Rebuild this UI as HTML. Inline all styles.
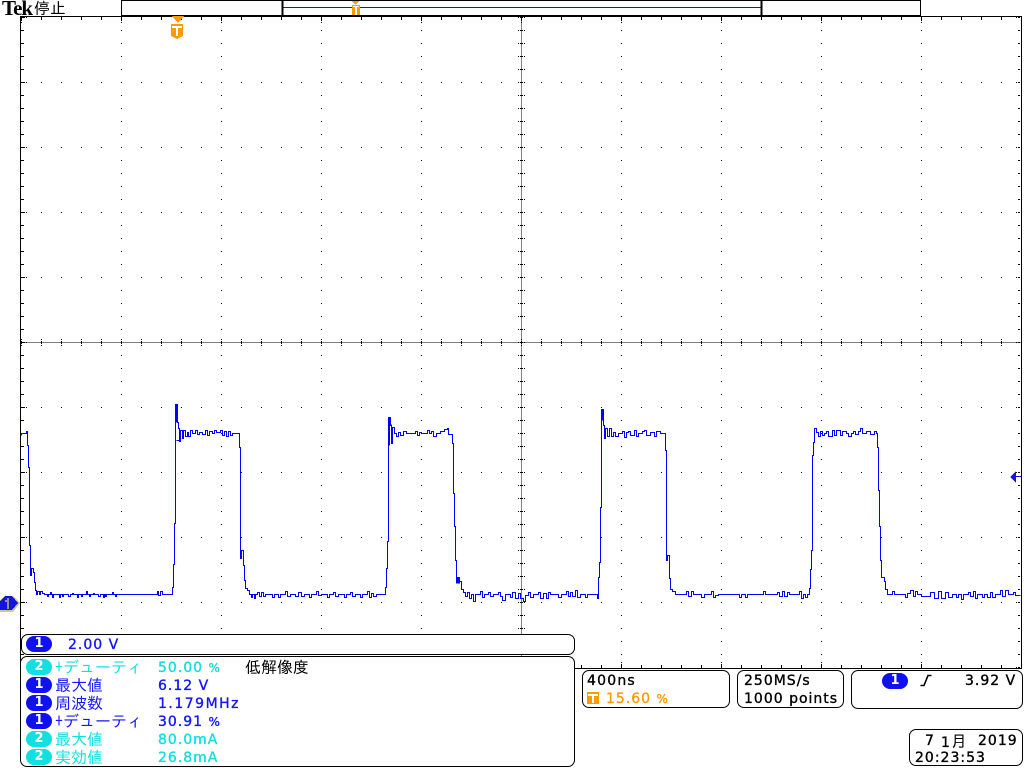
<!DOCTYPE html>
<html lang="ja"><head><meta charset="utf-8"><title>Tek</title>
<style>
html,body{margin:0;padding:0;background:#fff;width:1024px;height:768px;overflow:hidden}
#s{position:relative;width:1024px;height:768px;overflow:hidden;background:#fff}
svg{position:absolute;left:0;top:0}
.t{position:absolute;white-space:pre;font:14px/18px "DejaVu Sans","IPAGothic",sans-serif;letter-spacing:1px;color:#000;-webkit-text-stroke:.35px currentColor}
.j{position:absolute;white-space:pre;font:16px/18px "IPAGothic","Noto Sans CJK JP",sans-serif;letter-spacing:0}
.b{color:#1414ff}.c{color:#10e0e0}.o{color:#ff9900}
.n{font-size:12px;letter-spacing:0}
.p{position:absolute;box-sizing:border-box;border:1px solid #000;background:#fff;border-radius:7px}
.q{position:absolute;width:26px;height:16px;border-radius:8px;color:#fff;font:bold 13px/16px "DejaVu Sans",sans-serif;text-align:center}
.q.bb{background:#1010f0}.q.cc{background:#10e0e0}
</style></head><body><div id="s">
<svg width="1024" height="768" shape-rendering="crispEdges">
<defs>
<pattern id="a" width="20" height="65" patternUnits="userSpaceOnUse"><rect x="1" y="17" width="1" height="1"/></pattern>
<pattern id="b" width="100" height="13" patternUnits="userSpaceOnUse"><rect x="21" y="4" width="1" height="1"/></pattern>
<pattern id="d" width="20" height="2" patternUnits="userSpaceOnUse"><rect x="1" y="1" width="1" height="1"/></pattern>
<pattern id="e" width="2" height="13" patternUnits="userSpaceOnUse"><rect x="0" y="4" width="1" height="1"/></pattern>
<pattern id="f" width="20" height="1" patternUnits="userSpaceOnUse"><rect x="1" y="0" width="1" height="1"/></pattern>
<pattern id="g" width="100" height="2" patternUnits="userSpaceOnUse"><rect x="21" y="0" width="1" height="1"/></pattern>
<pattern id="h" width="1" height="13" patternUnits="userSpaceOnUse"><rect x="0" y="4" width="1" height="1"/></pattern>
<pattern id="i" width="2" height="65" patternUnits="userSpaceOnUse"><rect x="0" y="17" width="1" height="1"/></pattern>
</defs>
<rect x="21" y="17" width="1000" height="651" fill="url(#a)"/>
<rect x="21" y="17" width="1000" height="651" fill="url(#b)"/>
<rect x="21" y="339" width="1000" height="7" fill="url(#d)"/>
<rect x="518" y="17" width="7" height="651" fill="url(#e)"/>
<rect x="21" y="18" width="1000" height="2" fill="url(#f)"/>
<rect x="21" y="18" width="1000" height="5" fill="url(#g)"/>
<rect x="21" y="665" width="1000" height="2" fill="url(#f)"/>
<rect x="21" y="662" width="1000" height="5" fill="url(#g)"/>
<rect x="22" y="17" width="2" height="651" fill="url(#h)"/>
<rect x="1018" y="17" width="2" height="651" fill="url(#h)"/>
<rect x="22" y="17" width="5" height="651" fill="url(#i)"/>
<rect x="1015" y="17" width="5" height="651" fill="url(#i)"/>
<g transform="translate(.5 .5)">
<path d="M21 342.0H1021" stroke="#000" stroke-dasharray="1 1" fill="none"/>
<path d="M521 17V668" stroke="#000" stroke-dasharray="1 1" fill="none"/>
<path d="M20 16H1021V668H20Z" stroke="#000" fill="none"/>
<path d="M121 0H920V15H121Z" stroke="#000" fill="none"/>
<path d="M121 15H920" stroke="#000" fill="none"/>
<path d="M283 7H761" stroke="#1414d0" fill="none"/>
<path d="M282 0V15M761 0V15" stroke="#000" stroke-width="2" fill="none"/>
<path d="M282 0H761" stroke="#000" fill="none"/>
<path fill="none" stroke="#0000ff" d="M21 435V433H26V431H27V445H28V467H29V545H30V575H31V568H33V572H34V582H35V590H36V594H37V591H39V594H40V591H42V593H44V594H47V596H48V594H50V592H51V594h1v3h1v-3h6v3h1v-3h2v2h1v-2h5v2h2v-2h2v-1h1v1h4v3h1v-3h3v2h1v-2h4v-3h1v3h2v2h1v-2h3v-1h1v1h4v2h2v-2h3v3h1v-3h1v2h1v-2h6v-2h1v2h2v2h1v-2H157V591H158V595H160V591H162V594H172V587H173V564H174V523H175V404H177V422H178V428H179V441H180V430H182V438H183V430H185V436H187V432H188V436H190V430H192V433H195V430H197V434H199V432H202V434H205V430H207V435H209V431H212V433H214V430H216V432H220V430H222V435H224V431H226V436H228V431H230V435H232V433H239V447H240V558H241V550H243V565H244V580H245V588H247V590H249V594H251V597H252V594H254V598H255V594H257V592H259V596H261V592H263V596H265V594H272V597H274V594H278V597H280V594H285V591H287V596H290V594H295V596H298V592H301V596H304V594H309V597H311V594H316V591H318V595H321V594H327V597H329V594H333V592H335V596H338V594H344V597H346V594H350V592H352V596H355V594H360V597H362V594H367V591H369V597H371V593H373V596H376V594H385V587H386V568H387V541H388V417H390V425H391V443H392V427H394V433H396V436H398V432H400V435H403V431H406V433H415V431H417V435H419V432H421V433H427V430H429V433H431V431H433V436H436V433H440V431H444V429H447V428H448V434H452V443H453V493H454V526H455V560H456V577H459V581H461V589H463V592H465V596H467V592H469V598H471V594H473V601H475V594H480V591H482V597H484V594H488V592H490V596H493V594H498V592H500V596H502V600H505V594H510V597H512V592H515V598H518V593H520V598H523V601H525V595H528V592H530V597H533V594H538V592H540V598H543V593H546V598H548V592H550V594H558V597H561V594H566V591H568V596H570V592H572V596H575V590H577V597H580V594H585V597H587V594H597V598H598V577H599V562H600V507H601V409H603V425H604V438H605V428H607V436H609V428H611V436H613V432H615V436H618V433H622V431H624V437H626V432H628V431H630V435H634V430H636V436H638V433H642V431H644V430H646V435H650V432H654V436H656V431H660V433H665V450H666V560H667V555H669V578H670V589H672V591H675V594H686V591H688V596H691V591H693V594H701V597H704V594H711V591H713V597H715V595H718V594H739V597H741V594H745V597H747V594H763V591H765V594H777V592H779V596H782V591H784V596H787V592H789V594H799V591H801V598H803V594H805V597H807V594H809V588H810V569H811V550H812V455H813V442H814V428H816V432H818V436H820V431H822V435H824V433H826V431H828V436H832V430H834V435H836V430H840V435H842V431H846V433H848V436H851V433H853V431H855V434H858V431H860V428H862V433H866V431H870V434H874V431H876V433H877V447H878V490H879V526H880V560H881V577H884V581H885V589H887V594H892V591H894V594H905V597H907V593H910V590H913V596H915V591H917V594H921V596H930V592H934V598H938V591H941V598H945V592H948V597H952V594H956V597H958V594H961V599H963V594H968V592H970V596H973V591H975V598H977V594H982V597H984V594H987V597H990V592H992V597H995V594H1000V590H1002V596H1005V590H1008V594H1013V592H1015V595H1020"/>
<path d="M176 404V422M176 440H180M180 430H181M388 417V445M389 417V445M390 424H391M239 433H232M456 577V583M457 577V583M458 577V583M459 577V583M601 409V420M602 409V420" stroke="#0000ff" fill="none"/>
</g>
<polygon points="1010,477 1016,471 1016,483" fill="#1414e0"/>
<rect x="1015" y="476" width="6" height="1" fill="#1414e0"/>
<polygon points="0,600 5,596 13,596 20,603 13,612 0,612" fill="#c8c890"/>
<polygon points="0,601 5,596 12,596 18,603 12,610 0,610" fill="#1414e0"/>
<rect x="7" y="598" width="2" height="11" fill="#909090"/><rect x="5" y="600" width="2" height="2" fill="#909090"/>
<polygon points="172,16 184,16 178,23" fill="#ff9900"/>
<polygon points="171,24 183,24 183,36 177,39 171,36" fill="#ff9900"/>
<rect x="172" y="26" width="10" height="2" fill="#fff"/><rect x="176" y="26" width="2" height="10" fill="#fff"/>
<polygon points="352,1 359,1 355.5,5" fill="#ff9900"/>
<polygon points="352,5 360,5 360,15 352,15" fill="#ff9900"/>
<rect x="353" y="6" width="6" height="1" fill="#fff"/><rect x="355" y="6" width="2" height="9" fill="#fff"/>
</svg>
<div style="position:absolute;left:2px;top:-3px;font:bold 21px/22px 'Liberation Serif',serif;letter-spacing:-1px;color:#000">Tek</div>
<div class="j" style="left:34px;top:-1px;color:#000">停止</div>

<div class="p" style="left:21px;top:634px;width:554px;height:21px"></div>
<div class="q bb" style="left:26px;top:636px">1</div>
<div class="t b" style="left:68px;top:636px">2.00 V</div>

<div class="p" style="left:20px;top:656px;width:555px;height:111px"></div>
<div class="q cc" style="left:26px;top:659px">2</div>
<div class="j c" style="left:55px;top:658px">+デューティ</div>
<div class="t c" style="left:158px;top:659px">50.00 <span class="n">%</span></div>
<div class="j" style="left:245px;top:658px;color:#000">低解像度</div>
<div class="q bb" style="left:26px;top:677px">1</div>
<div class="j b" style="left:55px;top:676px">最大値</div>
<div class="t b" style="left:158px;top:677px">6.12 V</div>
<div class="q bb" style="left:26px;top:695px">1</div>
<div class="j b" style="left:55px;top:694px">周波数</div>
<div class="t b" style="left:158px;top:695px;letter-spacing:1.5px">1.179MHz</div>
<div class="q bb" style="left:26px;top:713px">1</div>
<div class="j b" style="left:55px;top:712px">+デューティ</div>
<div class="t b" style="left:158px;top:713px">30.91 <span class="n">%</span></div>
<div class="q cc" style="left:26px;top:731px">2</div>
<div class="j c" style="left:55px;top:730px">最大値</div>
<div class="t c" style="left:158px;top:731px">80.0mA</div>
<div class="q cc" style="left:26px;top:749px">2</div>
<div class="j c" style="left:55px;top:748px">実効値</div>
<div class="t c" style="left:158px;top:749px">26.8mA</div>

<div class="p" style="left:582px;top:670px;width:148px;height:38px"></div>
<div class="t" style="left:587px;top:672px;letter-spacing:1.2px">400ns</div>
<svg width="1024" height="768" shape-rendering="crispEdges" style="pointer-events:none"><rect x="587" y="692" width="12" height="12" fill="#ff9900"/><rect x="588" y="694" width="10" height="2" fill="#fff"/><rect x="592" y="694" width="2" height="9" fill="#fff"/></svg>
<div class="t o" style="left:606px;top:690px">15.60 <span class="n">%</span></div>

<div class="p" style="left:737px;top:670px;width:107px;height:38px"></div>
<div class="t" style="left:744px;top:672px">250MS/s</div>
<div class="t" style="left:744px;top:690px">1000 points</div>

<div class="p" style="left:851px;top:670px;width:172px;height:39px"></div>
<div class="q bb" style="left:882px;top:673px">1</div>
<svg width="1024" height="768" style="pointer-events:none"><path d="M920.5 685.5H924L928 675.5H931.5" fill="none" stroke="#000" stroke-width="1.6"/></svg>
<div class="t" style="left:965px;top:672px">3.92 V</div>

<div class="p" style="left:909px;top:729px;width:114px;height:37px"></div>
<div class="t" style="left:925px;top:732px">7</div>
<div class="t" style="left:941px;top:732px">1<span style="font:16px/18px 'IPAGothic',sans-serif;-webkit-text-stroke:0">月</span></div>
<div class="t" style="left:978px;top:732px">2019</div>
<div class="t" style="left:915px;top:749px">20:23:53</div>
</div></body></html>
